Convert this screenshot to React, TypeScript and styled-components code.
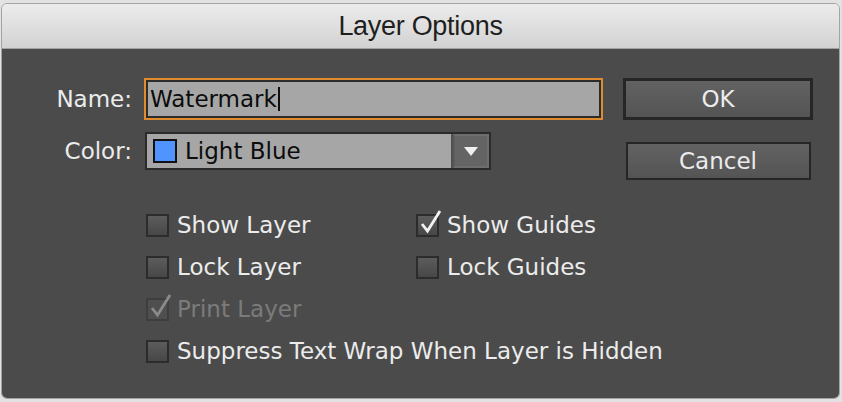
import React from 'react';
import styled, { createGlobalStyle } from 'styled-components';

const GlobalStyle = createGlobalStyle`
  html, body {
    margin: 0;
    padding: 0;
    background: #e2e2e2;
  }
  #root {
    width: 842px;
    height: 402px;
  }
`;

const Window = styled.div`
  margin: 3px 2px 0 1px;
  height: 396px;
  border: 1px solid #a4a4a4;
  border-radius: 6px;
  overflow: hidden;
  display: flex;
  flex-direction: column;
  box-sizing: border-box;
`;

const TitleBar = styled.div`
  height: 44px;
  flex-shrink: 0;
  background: linear-gradient(#ececec, #d2d2d2);
  border-bottom: 1px solid #a0a0a0;
  display: flex;
  align-items: center;
  justify-content: center;
  font-family: 'Liberation Sans', Arial, sans-serif;
  font-size: 27px;
  color: #1e1e1e;
  letter-spacing: -0.3px;
`;

const Body = styled.div`
  flex: 1;
  background: #4b4b4b;
  padding: 29px 0 0 0;
  font-family: 'DejaVu Sans', sans-serif;
  font-size: 23px;
  color: #ececec;
`;

const Top = styled.div`
  display: flex;
`;

const Form = styled.div`
  display: flex;
  flex-direction: column;
  gap: 12px;
`;

const FieldRow = styled.div`
  display: flex;
  align-items: center;
  gap: 12px;
`;

const Label = styled.div`
  width: 130px;
  text-align: right;
`;

const NameInput = styled.div`
  width: 459px;
  height: 42px;
  box-sizing: border-box;
  border: 2px solid #df8b2e;
  display: flex;
`;

const InputInner = styled.div`
  flex: 1;
  border: 2px solid #2c2c2c;
  background: #a6a6a6;
  color: #0c0c0c;
  display: flex;
  align-items: center;
  padding-left: 2px;
`;

const Caret = styled.span`
  width: 2px;
  height: 24px;
  background: #111;
  margin-left: 1px;
`;

const Select = styled.div`
  width: 346px;
  height: 38px;
  box-sizing: border-box;
  margin-left: 1px;
  border: 2px solid #2b2b2b;
  display: flex;
`;

const SelectValue = styled.div`
  flex: 1;
  background: #a6a6a6;
  color: #0c0c0c;
  display: flex;
  align-items: center;
  gap: 8px;
  padding-left: 6px;
  border-right: 2px solid #505050;
`;

const Swatch = styled.span<{ $color: string }>`
  width: 20px;
  height: 20px;
  border: 2px solid #111;
  background: ${(p) => p.$color};
`;

const SelectArrow = styled.div`
  width: 32px;
  background: #646464;
  border: 2px solid #6e6e6e;
  border-left-color: #5c5c5c;
  display: flex;
  align-items: center;
  justify-content: center;
`;

const Buttons = styled.div`
  margin-left: 20px;
  display: flex;
  flex-direction: column;
  align-items: center;
  gap: 22px;
`;

const Button = styled.div<{ $default?: boolean }>`
  width: ${(p) => (p.$default ? 190 : 185)}px;
  height: ${(p) => (p.$default ? 42 : 38)}px;
  box-sizing: border-box;
  border: ${(p) => (p.$default ? 3 : 2)}px solid #262626;
  background: linear-gradient(#626262, #545454);
  color: #ececec;
  display: flex;
  align-items: center;
  justify-content: center;
`;

const Checks = styled.div`
  margin: 34px 0 0 144px;
  display: grid;
  grid-template-columns: 270px 270px;
  row-gap: 20px;
`;

const CheckRow = styled.div<{ $wide?: boolean; $disabled?: boolean }>`
  grid-column: ${(p) => (p.$wide ? '1 / span 2' : 'auto')};
  height: 22px;
  display: flex;
  align-items: center;
  gap: 8px;
  color: ${(p) => (p.$disabled ? '#7b7b7b' : '#ececec')};
  white-space: nowrap;
`;

const Box = styled.span<{ $disabled?: boolean }>`
  position: relative;
  width: 23px;
  height: 23px;
  box-sizing: border-box;
  border: 2px solid ${(p) => (p.$disabled ? '#3e3e3e' : '#2c2c2c')};
  background: ${(p) =>
    p.$disabled ? '#4f4f4f' : 'linear-gradient(#5c5c5c, #474747)'};
  flex-shrink: 0;
`;

const Tick = styled.svg`
  position: absolute;
  left: 1px;
  top: -7px;
`;

type CheckProps = {
  label: string;
  checked?: boolean;
  disabled?: boolean;
  wide?: boolean;
};

const Check = ({ label, checked, disabled, wide }: CheckProps) => (
  <CheckRow $wide={wide} $disabled={disabled}>
    <Box $disabled={disabled}>
      {checked && (
        <Tick width="24" height="26" viewBox="0 0 24 26">
          <path
            d="M3 15 L8.5 22 L21 2"
            fill="none"
            stroke={disabled ? '#8a8a8a' : '#f2f2f2'}
            strokeWidth="2.8"
          />
        </Tick>
      )}
    </Box>
    {label}
  </CheckRow>
);

const App = () => {
  return (
    <>
      <GlobalStyle />
      <Window>
        <TitleBar>Layer Options</TitleBar>
        <Body>
          <Top>
            <Form>
              <FieldRow>
                <Label>Name:</Label>
                <NameInput>
                  <InputInner>
                    Watermark
                    <Caret />
                  </InputInner>
                </NameInput>
              </FieldRow>
              <FieldRow>
                <Label>Color:</Label>
                <Select>
                  <SelectValue>
                    <Swatch $color="#4f94ff" />
                    Light Blue
                  </SelectValue>
                  <SelectArrow>
                    <svg width="16" height="10" viewBox="0 0 16 10">
                      <path d="M1 1 H15 L8 10 Z" fill="#f0f0f0" />
                    </svg>
                  </SelectArrow>
                </Select>
              </FieldRow>
            </Form>
            <Buttons>
              <Button $default>OK</Button>
              <Button>Cancel</Button>
            </Buttons>
          </Top>
          <Checks>
            <Check label="Show Layer" />
            <Check label="Show Guides" checked />
            <Check label="Lock Layer" />
            <Check label="Lock Guides" />
            <Check label="Print Layer" checked disabled />
            <div />
            <Check label="Suppress Text Wrap When Layer is Hidden" wide />
          </Checks>
        </Body>
      </Window>
    </>
  );
};

export default App;
